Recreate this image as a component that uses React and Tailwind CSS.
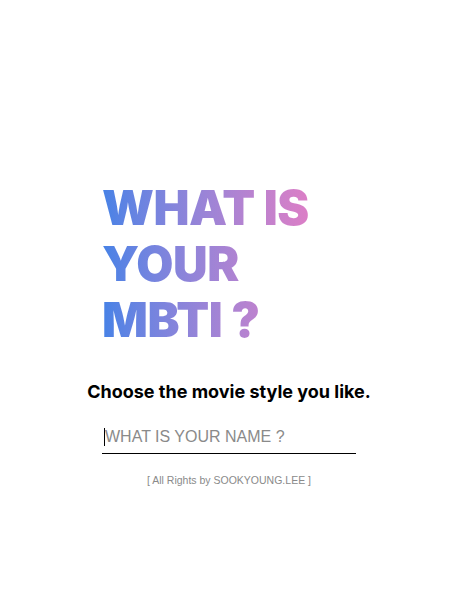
export default function App() {
  return (
    <div className="min-h-[615px] w-full bg-white flex flex-col items-center pl-2">
      <div className="w-[254px] mt-[180px]">
        <h1
          className="inline-block text-[48px] leading-[56px] font-black bg-gradient-to-r from-[#4682e6] to-[#dc7ec6] bg-clip-text text-transparent tracking-[-0.5px]"
          style={{ fontFamily: "Inter, sans-serif" }}
        >
          WHAT IS<br />YOUR<br />MBTI&nbsp;?
        </h1>
      </div>
      <p
        className="mt-[30px] text-[18px] font-bold text-black"
        style={{ fontFamily: "Inter, sans-serif" }}
      >
        Choose the movie style you like.
      </p>
      <div className="mt-[22px] w-[254px] border-b border-black pb-[6px] pl-[2px]">
        <div className="flex items-center">
          <span className="w-px h-[18px] bg-black"></span>
          <span
            className="text-[16px] text-[#8a8a8a] leading-[20px]"
            style={{ fontFamily: "'Liberation Sans', Arial, sans-serif" }}
          >
            WHAT IS YOUR NAME ?
          </span>
        </div>
      </div>
      <p
        className="mt-[19px] text-[10.5px] text-[#8a8a8a]"
        style={{ fontFamily: "'Liberation Sans', Arial, sans-serif" }}
      >
        [ All Rights by SOOKYOUNG.LEE ]
      </p>
    </div>
  );
}
